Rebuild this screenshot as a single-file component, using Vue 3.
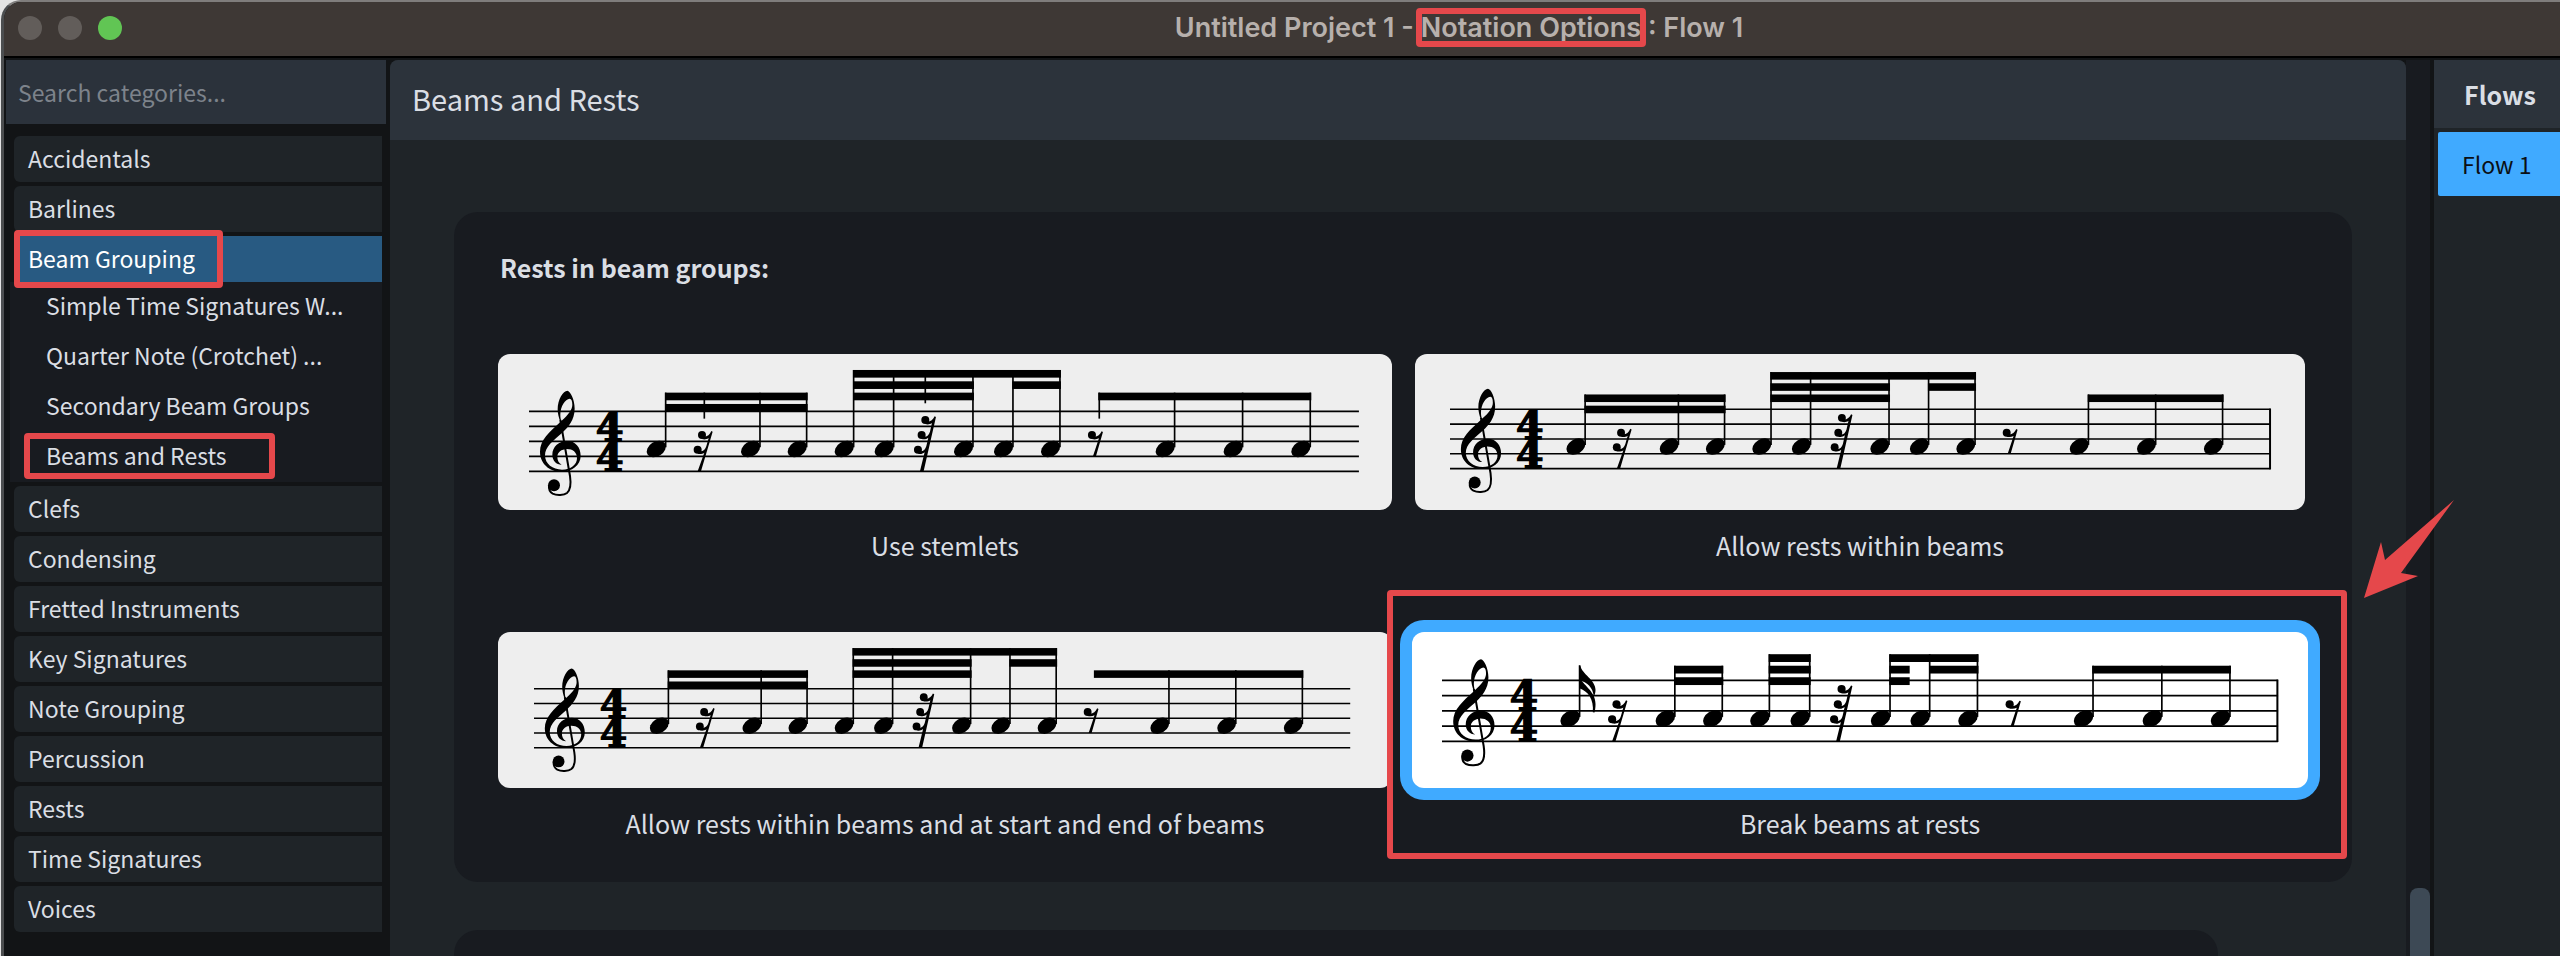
<script setup>
import { ref } from 'vue';

const categories = [
    { name: 'Accidentals' },
    { name: 'Barlines' },
    {
        name: 'Beam Grouping',
        marked: true,
        children: [
            { name: 'Simple Time Signatures W...' },
            { name: 'Quarter Note (Crotchet) ...' },
            { name: 'Secondary Beam Groups' },
            { name: 'Beams and Rests', marked: true }
        ]
    },
    { name: 'Clefs' },
    { name: 'Condensing' },
    { name: 'Fretted Instruments' },
    { name: 'Key Signatures' },
    { name: 'Note Grouping' },
    { name: 'Percussion' },
    { name: 'Rests' },
    { name: 'Time Signatures' },
    { name: 'Voices' }
];

const search = ref('');
const activeCategory = ref('Beam Grouping');
const selected = ref('break');

// Score units: 45 per staff space, y = 0 is the top staff line
const lines = [0, 45, 90, 135, 180];

// stem x positions shared by the first three examples
const stems = (shift) => [
    [411, shift - 56], [694, shift - 56], [834, shift - 56],
    [975, shift - 124], [1095, shift - 124], [1333, shift - 124], [1453, shift - 124], [1594, shift - 124],
    [1938, shift - 56], [2142, shift - 56], [2345, shift - 56]
];

// beams are [from, to, top]
const beams = (shift, lastFrom) => [
    [411, 834, shift - 56], [411, 834, shift - 22],
    [975, 1594, shift - 124], [975, 1333, shift - 90], [975, 1333, shift - 56], [1453, 1594, shift - 90],
    [lastFrom, 2345, shift - 56]
];

const rests = [
    { type: 'r16', x: 494, y: 58 },
    { type: 'r32', x: 1155, y: 14 },
    { type: 'r8', x: 1677, y: 58 }
];

const options = [
    {
        id: 'stemlets',
        label: 'Use stemlets',
        width: 894, x: 31, y: 57.3, scale: 0.3333, length: 2490,
        notes: stems(0),
        beams: beams(0, 1711),
        stemlets: [[526, -56, 22], [1189, -124, -24], [1711, -56, 22]],
        rests
    },
    {
        id: 'within',
        label: 'Allow rests within beams',
        width: 890, x: 35, y: 55.3, scale: 0.3296, length: 2490, barline: true,
        notes: stems(11),
        beams: beams(11, 1938),
        stemlets: [],
        rests
    },
    {
        id: 'startEnd',
        label: 'Allow rests within beams and at start and end of beams',
        width: 894, x: 36, y: 56.7, scale: 0.3278, length: 2490,
        notes: stems(0),
        beams: beams(0, 1711),
        stemlets: [],
        rests
    },
    {
        id: 'break',
        label: 'Break beams at rests',
        width: 896, x: 30, y: 48.3, scale: 0.3389, length: 2467, barline: true, marked: true,
        notes: [
            [407, -44], [688, -43], [828, -43], [967, -77], [1086, -77],
            [1323, -77], [1440, -77], [1581, -77], [1922, -43], [2125, -43], [2326, -43]
        ],
        beams: [
            [688, 828, -43], [688, 828, -9],
            [967, 1086, -77], [967, 1086, -43], [967, 1086, -9],
            [1323, 1581, -77], [1323, 1378, -43], [1323, 1378, -9], [1440, 1581, -43],
            [1922, 2326, -43]
        ],
        stemlets: [],
        flag: [407, -44],
        rests: [
            { type: 'r16', x: 490, y: 58 },
            { type: 'r32', x: 1145, y: 14 },
            { type: 'r8', x: 1663, y: 58 }
        ]
    }
];
</script>

<template>
    <div class="window">
        <header class="titlebar">
            <div class="lights">
                <button class="light" aria-label="Close"></button>
                <button class="light" aria-label="Minimise"></button>
                <button class="light green" aria-label="Zoom"></button>
            </div>
            <h1 class="title">Untitled Project 1 - <span class="title-part">Notation Options<i class="mark"></i></span> : Flow 1</h1>
        </header>

        <div class="body">
            <aside class="sidebar">
                <input v-model="search" class="search" type="text" placeholder="Search categories..." aria-label="Search categories">
                <ul class="categories">
                    <li v-for="cat in categories" :key="cat.name">
                        <button
                            class="category"
                            :class="{ active: cat.name === activeCategory }"
                            @click="activeCategory = cat.name"
                        >
                            {{ cat.name }}
                            <i v-if="cat.marked" class="mark"></i>
                        </button>
                        <ul v-if="cat.children" class="pages">
                            <li v-for="page in cat.children" :key="page.name">
                                <button class="page">
                                    {{ page.name }}
                                    <i v-if="page.marked" class="mark"></i>
                                </button>
                            </li>
                        </ul>
                    </li>
                </ul>
            </aside>

            <main class="main">
                <h2 class="main-title">Beams and Rests</h2>
                <div class="content">
                    <section class="card">
                        <h3 class="card-title">Rests in beam groups:</h3>
                        <div class="options">
                            <div v-for="opt in options" :key="opt.id" class="option">
                                <label class="choice">
                                    <input v-model="selected" class="radio" type="radio" name="rests" :value="opt.id">
                                    <span class="preview" :style="{ maxWidth: opt.width + 'px' }">
                                        <svg class="score" :viewBox="`0 0 ${opt.width} 156`" aria-hidden="true">
                                            <g :transform="`translate(${opt.x} ${opt.y}) scale(${opt.scale})`">
                                                <path v-for="y in lines" :key="y" class="line" :d="`M0 ${y}H${opt.length}`" />
                                                <path v-if="opt.barline" class="barline" :d="`M${opt.length - 2} -2V182`" />

                                                <!-- treble clef -->
                                                <g transform="translate(-117 -214)">
                                                    <path fill-rule="evenodd" d="M232 152C241 153 254 178 254 206C254 240 234 262 216 279C190 302 165 320 165 346C165 372 188 389 216 389C243 389 261 374 261 354C261 337 248 327 231 327C214 327 202 338 202 350C202 361 206 369 215 374C199 374 187 362 187 344C187 320 207 303 232 303C256 303 272 322 272 347C272 376 246 395 214 395C177 395 150 370 150 335C150 300 178 276 211 246C206 232 203 220 203 208C203 178 220 152 232 152ZM239 176C226 177 211 199 211 224C211 232 212 236 214 243C236 224 247 208 247 194C247 182 244 176 239 176Z" />
                                                    <path class="tail" d="M211 240L240 408C244 436 242 450 231 459C222 466 200 467 188 461C179 456 176 447 177 437" />
                                                    <circle cx="192" cy="436" r="18" />
                                                </g>

                                                <text class="time" x="242" y="89">4</text>
                                                <text class="time" x="242" y="179">4</text>

                                                <g v-for="note in opt.notes" :key="note[0]">
                                                    <ellipse :transform="`translate(${note[0] - 29} 113) rotate(-32)`" rx="31" ry="22" />
                                                    <path class="stem" :d="`M${note[0] - 1} ${note[1]}V108`" />
                                                </g>
                                                <rect
                                                    v-for="(b, i) in opt.beams"
                                                    :key="'b' + i"
                                                    :x="b[0] - 3"
                                                    :y="b[2]"
                                                    :width="b[1] - b[0] + 5"
                                                    height="23"
                                                />
                                                <path
                                                    v-for="s in opt.stemlets"
                                                    :key="'s' + s[0]"
                                                    class="stem"
                                                    :d="`M${s[0]} ${s[1]}V${s[2]}`"
                                                />
                                                <path
                                                    v-if="opt.flag"
                                                    :transform="`translate(${opt.flag[0]} ${opt.flag[1]})`"
                                                    d="M-3 0H1C6 26 46 42 46 72C46 80 44 87 41 92C38 64 22 52 0 44ZM0 38C14 62 46 78 46 114C46 124 45 132 43 139L38 138C42 98 22 76 0 68Z"
                                                />

                                                <g v-for="r in opt.rests" :key="r.type" :transform="`translate(${r.x} ${r.y})`">
                                                    <template v-if="r.type === 'r8'">
                                                        <circle cx="12" cy="13" r="12" />
                                                        <path d="M41 2L45 4L24 77H15L33 23C26 27 18 27 12 25L18 18C28 19 36 13 41 2Z" />
                                                    </template>
                                                    <template v-else-if="r.type === 'r16'">
                                                        <circle cx="25" cy="13" r="12" />
                                                        <circle cx="12" cy="57" r="12" />
                                                        <path d="M53 1L57 3L22 122H12L32 66C25 71 18 71 12 69L18 62C28 63 35 57 38 47L45 22C38 27 31 27 25 25L31 18C42 18 48 12 53 1Z" />
                                                    </template>
                                                    <template v-else>
                                                        <circle cx="34" cy="12" r="12" />
                                                        <circle cx="23" cy="57" r="12" />
                                                        <circle cx="12" cy="101" r="12" />
                                                        <path d="M62 1L66 3L29 166H18L32 109C25 115 18 115 12 113L18 106C28 107 34 101 37 91L43 65C36 71 29 71 23 69L29 62C39 63 45 57 48 47L54 21C47 26 40 26 34 24L40 17C51 17 57 11 62 1Z" />
                                                    </template>
                                                </g>
                                            </g>
                                        </svg>
                                    </span>
                                    <span class="caption">{{ opt.label }}</span>
                                </label>
                                <template v-if="opt.marked">
                                    <i class="mark option-mark"></i>
                                    <svg class="arrow" viewBox="0 0 92 100" aria-hidden="true">
                                        <path d="M91 1L22 61L18 43L1 99L55 77L38 74Z" />
                                    </svg>
                                </template>
                            </div>
                        </div>
                    </section>
                    <section class="card next-card"></section>
                </div>
            </main>

            <div class="scrollbar"><div class="thumb"></div></div>

            <aside class="flows">
                <h2 class="flows-title">Flows</h2>
                <button class="flow">Flow 1</button>
            </aside>
        </div>
    </div>
</template>

<style>
body {
    margin: 0;
    background: #e4e4e4;
}
</style>

<style scoped>
* {
    box-sizing: border-box;
}

.window {
    min-height: 100vh;
    display: flex;
    flex-direction: column;
    margin-left: 1px;
    overflow: hidden;
    border-top: 2px solid #7f7d7c;
    border-left: 3px solid #4c4e50;
    border-top-left-radius: 20px;
    background: #121416;
    color: #dadee4;
    font-family: "Noto Sans CJK SC", "Noto Sans", sans-serif;
    font-size: 23px;
    line-height: 32px;
}

h1, h2, h3, ul {
    margin: 0;
    padding: 0;
    list-style: none;
}

button {
    display: block;
    border: 0;
    color: inherit;
    font: inherit;
    text-align: left;
    white-space: nowrap;
    cursor: pointer;
}

/* title bar */
.titlebar {
    display: flex;
    align-items: center;
    height: 56px;
    padding-bottom: 2px;
    background: #3e3835;
    border-bottom: 2px solid #000;
}

.lights {
    display: flex;
    gap: 16px;
    padding-left: 14px;
}

.light {
    width: 24px;
    height: 24px;
    padding: 0;
    border-radius: 50%;
    background: #625d5a;
}

.light.green {
    background: #61c554;
}

.title {
    flex: 1;
    padding-left: 236px;
    color: #b7b0ac;
    font-family: Inter, "Liberation Sans", sans-serif;
    font-size: 27px;
    font-weight: 600;
    text-align: center;
}

.title-part {
    position: relative;
}

/* red highlight frames */
.mark {
    position: absolute;
    inset: -3px -5px;
    border: 6px solid #e5484b;
    border-radius: 4px;
    pointer-events: none;
}

.body {
    flex: 1;
    display: flex;
    padding: 2px 0 0 2px;
}

/* sidebar */
.sidebar {
    width: 380px;
    flex: none;
}

.search {
    display: block;
    width: 100%;
    height: 64px;
    padding: 0 12px;
    border: 0;
    background: #2b323b;
    color: #dadee4;
    font: inherit;
}

.search::placeholder {
    color: #7d838b;
    opacity: 1;
}

.categories {
    display: flex;
    flex-direction: column;
    gap: 4px;
    padding: 12px 4px 24px;
}

.category {
    position: relative;
    width: calc(100% - 4px);
    height: 46px;
    margin-left: 4px;
    padding: 0 14px 2px;
    border-radius: 6px 0 0 6px;
    background: #1f2428;
}

.category.active {
    background: #285a82;
    color: #fff;
}

.category .mark {
    inset: -6px 159px -6px 0;
}

.pages {
    background: #181b20;
}

.page {
    position: relative;
    width: 100%;
    height: 50px;
    padding: 0 36px 4px;
    background: none;
}

.page .mark {
    inset: 1px 107px 3px 14px;
}

/* main panel */
.main {
    flex: 1;
    display: flex;
    flex-direction: column;
    margin-left: 4px;
    background: #1f2428;
    border-radius: 8px 8px 0 0;
}

.main-title {
    height: 80px;
    padding: 0 22px;
    border-radius: 8px 8px 0 0;
    background: #2c333b;
    font-size: 29px;
    font-weight: 400;
    line-height: 76px;
}

.content {
    flex: 1;
    display: flex;
    flex-direction: column;
    padding: 72px 54px 0 64px;
}

.card {
    padding: 40px 44px;
    border-radius: 24px;
    background: #181b20;
}

.card-title {
    padding-left: 2px;
    font-size: 25px;
    font-weight: 700;
    line-height: 30px;
}

.options {
    display: grid;
    grid-template-columns: 894fr 896fr;
    gap: 70px 20px;
    margin: 72px 0 2px;
}

.option {
    position: relative;
}

.choice {
    display: flex;
    flex-direction: column;
    align-items: center;
    cursor: pointer;
}

.radio {
    position: absolute;
    opacity: 0;
}

.preview {
    width: 100%;
    border-radius: 12px;
    background: #eee;
}

.radio:checked + .preview {
    background: #fff;
    box-shadow: 0 0 0 12px #40aaff;
}

.score {
    display: block;
    width: 100%;
}

.line {
    stroke: #000;
    stroke-width: 5;
}

.barline {
    stroke: #000;
    stroke-width: 6;
}

.stem {
    stroke: #000;
    stroke-width: 5;
}

.tail {
    fill: none;
    stroke: #000;
    stroke-width: 6;
}

.time {
    stroke: #000;
    stroke-width: 4;
    font-family: "DejaVu Serif", serif;
    font-size: 120px;
    font-weight: 700;
    text-anchor: middle;
}

.caption {
    margin-top: 20px;
    font-size: 25px;
    line-height: 30px;
    padding-bottom: 2px;
}

.option-mark {
    inset: -42px -39px -19px -25px;
}

.arrow {
    position: absolute;
    z-index: 1;
    left: calc(100% + 55px);
    top: -133px;
    width: 92px;
    height: 100px;
    fill: #e5484b;
}

.next-card {
    flex: 1;
    width: calc(100% - 134px);
    margin-top: 48px;
    padding: 13px 44px;
    border-radius: 24px 24px 0 0;
}

/* scrollbar */
.scrollbar {
    display: flex;
    align-items: flex-end;
    width: 24px;
    padding-left: 4px;
    background: #181b20;
}

.thumb {
    width: 20px;
    height: 68px;
    border-radius: 8px 8px 0 0;
    background: #3d4955;
}

/* flows */
.flows {
    width: 126px;
    margin-left: 4px;
    background: #1f2428;
}

.flows-title {
    height: 68px;
    padding-left: 30px;
    background: #2c333b;
    font-size: 25px;
    font-weight: 700;
    line-height: 68px;
}

.flow {
    width: calc(100% - 4px);
    height: 64px;
    margin: 4px 0 0 4px;
    padding: 0 24px;
    border-radius: 2px 0 0 2px;
    background: #40aaff;
    color: #0b0f14;
}
</style>
